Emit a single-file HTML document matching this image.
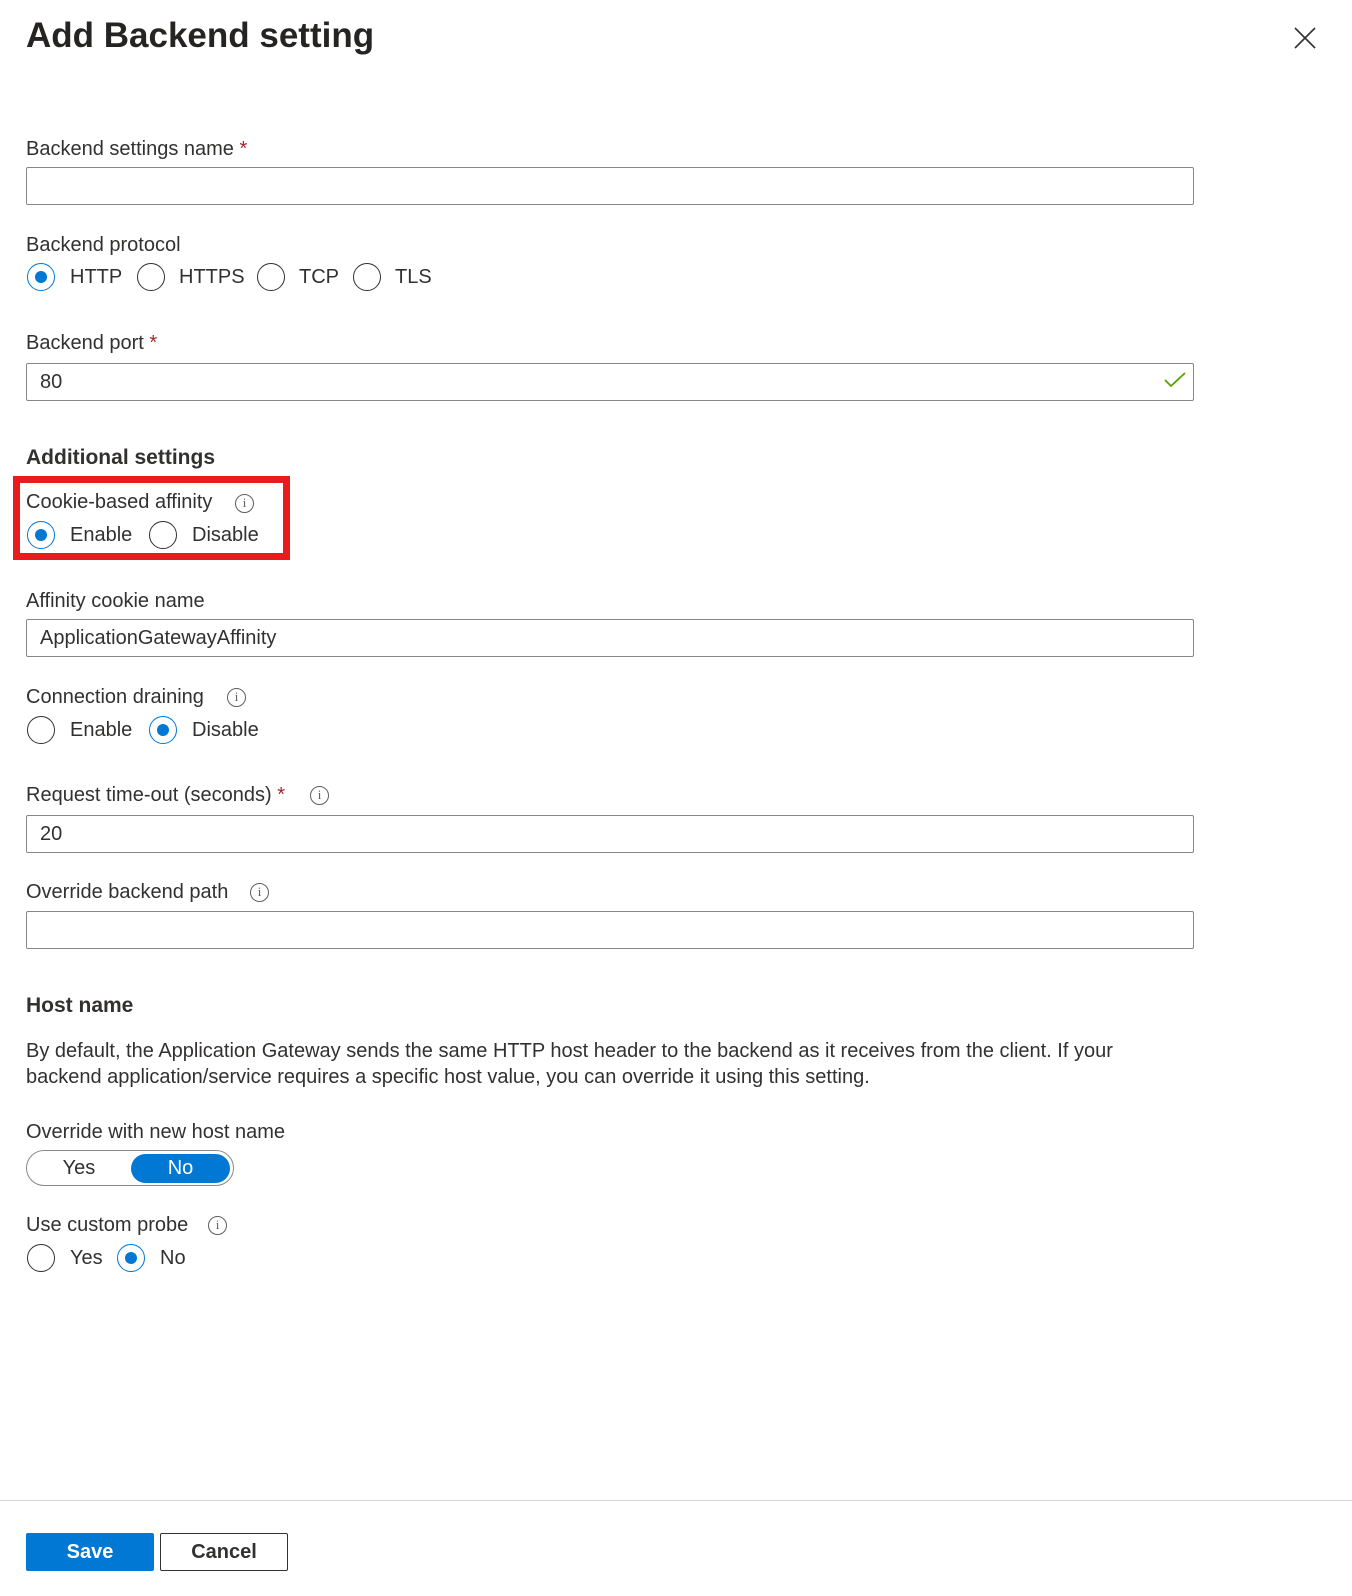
<!DOCTYPE html>
<html><head><meta charset="utf-8"><style>
*{box-sizing:border-box;margin:0;padding:0}
body{width:1352px;height:1596px;background:#fff;position:relative;font-family:"Liberation Sans",sans-serif;color:#323130;font-size:20px;overflow:hidden}
.a{position:absolute;white-space:nowrap}
.lbl{line-height:24px}
.req{color:#a4262c}
.inp{position:absolute;left:26px;width:1168px;height:38px;border:1px solid #8a8886;border-radius:2px;padding-left:13px;line-height:36px;font-size:20px}
.r{position:absolute;width:28px;height:28px;border:1.5px solid #323130;border-radius:50%}
.r.on{border-color:#0078d4}
.r.on:after{content:"";position:absolute;left:6.5px;top:6.5px;width:12px;height:12px;border-radius:50%;background:#0078d4}
.info{position:absolute;width:19px;height:19px;border:1.3px solid #605e5c;border-radius:50%;font-size:13px;line-height:16px;text-align:center;color:#605e5c;font-family:"Liberation Serif",serif}
h2{font-size:21px;font-weight:bold}
</style></head><body>
<div class="a" style="left:26px;top:13px;font-size:35px;line-height:46px;color:#252423;font-weight:bold">Add Backend setting</div>
<svg class="a" style="left:1294px;top:27px" width="22" height="22"><path d="M1 1L21 21M21 1L1 21" stroke="#323130" stroke-width="1.6"/></svg>

<div class="a lbl" style="left:26px;top:137px">Backend settings name <span class="req">*</span></div>
<div class="inp" style="top:167px"></div>

<div class="a lbl" style="left:26px;top:233px">Backend protocol</div>
<div class="r on" style="left:27px;top:263px"></div><div class="a lbl" style="left:70px;top:265px">HTTP</div>
<div class="r" style="left:137px;top:263px"></div><div class="a lbl" style="left:179px;top:265px">HTTPS</div>
<div class="r" style="left:257px;top:263px"></div><div class="a lbl" style="left:299px;top:265px">TCP</div>
<div class="r" style="left:353px;top:263px"></div><div class="a lbl" style="left:395px;top:265px">TLS</div>

<div class="a lbl" style="left:26px;top:331px">Backend port <span class="req">*</span></div>
<div class="inp" style="top:363px">80</div>
<svg class="a" style="left:1164px;top:371px" width="22" height="18"><path d="M1 9L7 15L21 2" stroke="#57a300" stroke-width="1.8" fill="none"/></svg>

<h2 class="a" style="left:26px;top:445px;line-height:26px">Additional settings</h2>
<div class="a" style="left:13px;top:476px;width:277px;height:84px;border:7px solid #e81c1c"></div>
<div class="a lbl" style="left:26px;top:490px">Cookie-based affinity</div>
<div class="info" style="left:235px;top:494px">i</div>
<div class="r on" style="left:27px;top:521px"></div><div class="a lbl" style="left:70px;top:523px">Enable</div>
<div class="r" style="left:149px;top:521px"></div><div class="a lbl" style="left:192px;top:523px">Disable</div>

<div class="a lbl" style="left:26px;top:589px">Affinity cookie name</div>
<div class="inp" style="top:619px">ApplicationGatewayAffinity</div>

<div class="a lbl" style="left:26px;top:685px">Connection draining</div>
<div class="info" style="left:227px;top:688px">i</div>
<div class="r" style="left:27px;top:716px"></div><div class="a lbl" style="left:70px;top:718px">Enable</div>
<div class="r on" style="left:149px;top:716px"></div><div class="a lbl" style="left:192px;top:718px">Disable</div>

<div class="a lbl" style="left:26px;top:783px">Request time-out (seconds) <span class="req">*</span></div>
<div class="info" style="left:310px;top:786px">i</div>
<div class="inp" style="top:815px">20</div>

<div class="a lbl" style="left:26px;top:880px">Override backend path</div>
<div class="info" style="left:250px;top:883px">i</div>
<div class="inp" style="top:911px"></div>

<h2 class="a" style="left:26px;top:993px;line-height:26px">Host name</h2>
<div class="a" style="left:26px;top:1038px;line-height:26px;white-space:normal;width:1150px">By default, the Application Gateway sends the same HTTP host header to the backend as it receives from the client. If your backend application/service requires a specific host value, you can override it using this setting.</div>

<div class="a lbl" style="left:26px;top:1120px">Override with new host name</div>
<div class="a" style="left:26px;top:1150px;width:208px;height:36px;border:1px solid #8a8886;border-radius:18px"></div>
<div class="a lbl" style="left:26px;top:1156px;width:106px;text-align:center">Yes</div>
<div class="a" style="left:131px;top:1154px;width:99px;height:29px;background:#0078d4;border-radius:15px;color:#fff;text-align:center;line-height:29px">No</div>

<div class="a lbl" style="left:26px;top:1213px">Use custom probe</div>
<div class="info" style="left:208px;top:1216px">i</div>
<div class="r" style="left:27px;top:1244px"></div><div class="a lbl" style="left:70px;top:1246px">Yes</div>
<div class="r on" style="left:117px;top:1244px"></div><div class="a lbl" style="left:160px;top:1246px">No</div>

<div class="a" style="left:0;top:1500px;width:1352px;height:1px;background:#d6d6d6"></div>
<div class="a" style="left:26px;top:1533px;width:128px;height:38px;background:#0078d4;border-radius:2px;color:#fff;font-weight:bold;text-align:center;line-height:38px">Save</div>
<div class="a" style="left:160px;top:1533px;width:128px;height:38px;border:1px solid #323130;border-radius:2px;text-align:center;line-height:36px;font-weight:bold;color:#323130">Cancel</div>
</body></html>
